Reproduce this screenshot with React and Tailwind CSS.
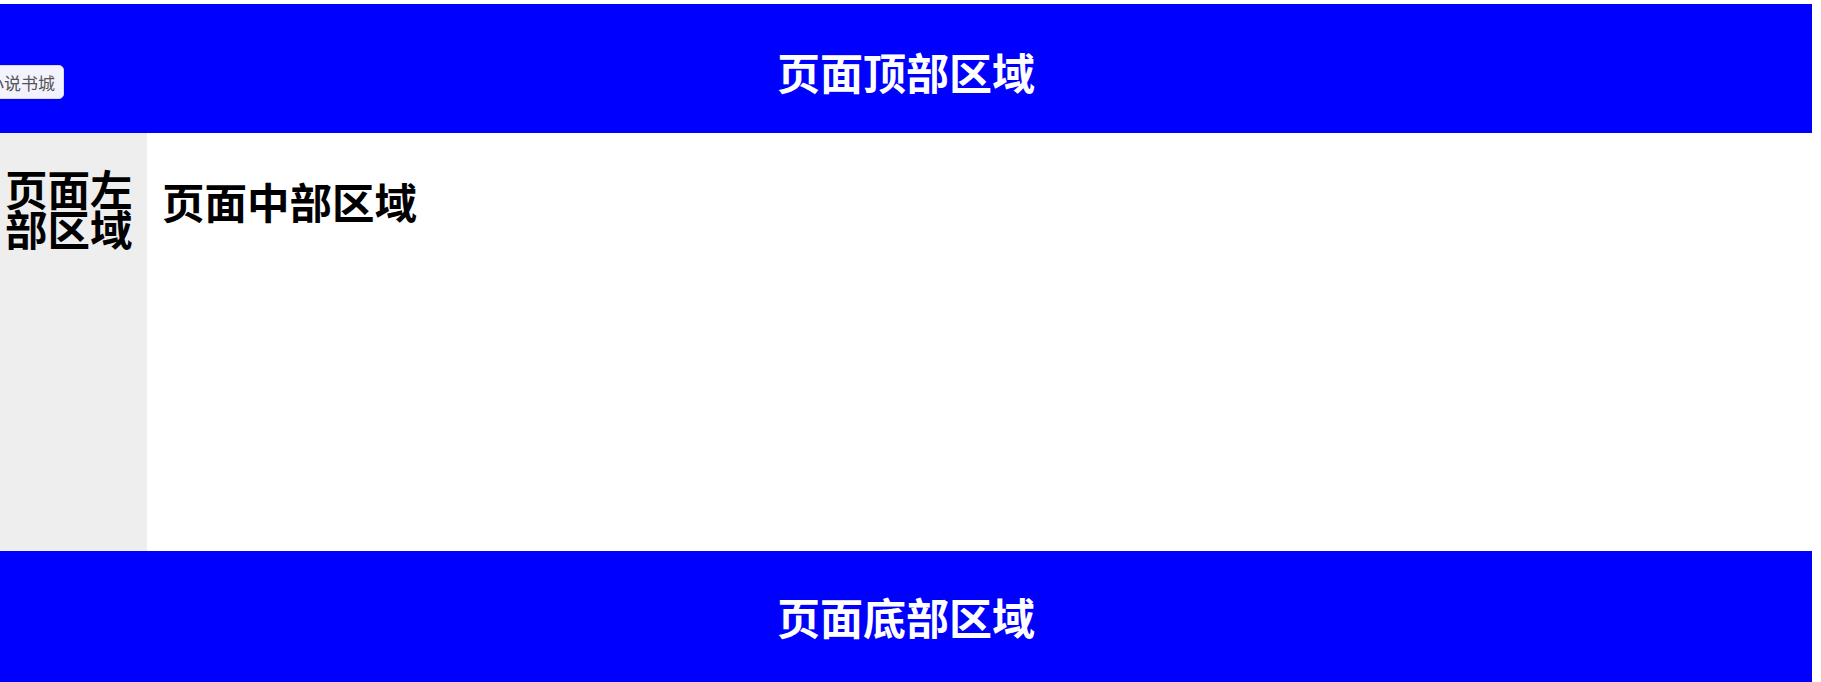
import React from "react";

const font = { fontFamily: '"Noto Sans CJK SC", "Noto Sans", sans-serif' };

const App = () => {
  return (
    <div className="relative w-[1821px] h-[682px] overflow-hidden bg-white pt-[4px]" style={font}>
      <div className="w-[1812px]">
        <header className="h-[129px] bg-[#0000ff] flex items-center justify-center">
          <h1 className="text-white font-bold text-[43px] leading-none pt-[5px]">页面顶部区域</h1>
        </header>

        <div className="flex h-[418px]">
          <aside className="w-[147px] shrink-0 bg-[#eeeeee] pl-[5px] pr-[7px] pt-[35px]">
            <h2 className="text-black font-bold text-[42.5px] leading-[40px]">页面左部区域</h2>
          </aside>
          <main className="flex-1 bg-white pl-[15px] pt-[48px]">
            <h2 className="text-black font-bold text-[42.5px] leading-[40px]">页面中部区域</h2>
          </main>
        </div>

        <footer className="h-[131px] bg-[#0000ff] flex items-center justify-center">
          <h1 className="text-white font-bold text-[43px] leading-none">页面底部区域</h1>
        </footer>
      </div>

      <button className="absolute left-[-22px] top-[65px] h-[34px] pl-[8px] pr-[8px] rounded-[5px] border border-[#d8d8e8] bg-[#f3f3fd] text-[#555] text-[17px] leading-none">
        小说书城
      </button>
    </div>
  );
};

export default App;
